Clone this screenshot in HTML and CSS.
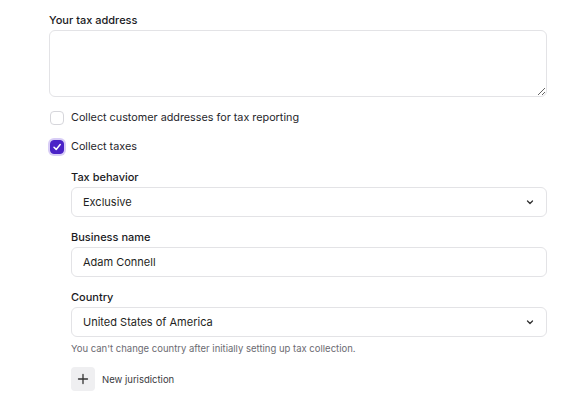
FILE: index.html
```html
<!DOCTYPE html>
<html>
<head>
<meta charset="utf-8">
<link rel="stylesheet" href="styles.css">
</head>
<body>
<div class="form">
  <div class="field">
    <label class="label">Your tax address</label>
    <textarea class="textarea"></textarea>
  </div>
  <label class="check first">
    <span class="box"></span>
    <span>Collect customer addresses for tax reporting</span>
  </label>
  <label class="check second">
    <span class="box checked">
      <svg width="10" height="10" viewBox="0 0 10 10"><path d="M2 5.2 L4.2 7.4 L8.2 2.6" fill="none" stroke="#fff" stroke-width="1.5" stroke-linecap="round" stroke-linejoin="round"/></svg>
    </span>
    <span>Collect taxes</span>
  </label>
  <div class="sub">
    <div class="field">
      <label class="label">Tax behavior</label>
      <div class="select"><span>Exclusive</span>
        <svg class="chev" width="10" height="10" viewBox="0 0 10 10"><path d="M2.5 4 L5 6.5 L7.5 4" fill="none" stroke="#333" stroke-width="1.3" stroke-linecap="round" stroke-linejoin="round"/></svg>
      </div>
    </div>
    <div class="field">
      <label class="label">Business name</label>
      <div class="input">Adam Connell</div>
    </div>
    <div class="field">
      <label class="label">Country</label>
      <div class="select"><span>United States of America</span>
        <svg class="chev" width="10" height="10" viewBox="0 0 10 10"><path d="M2.5 4 L5 6.5 L7.5 4" fill="none" stroke="#333" stroke-width="1.3" stroke-linecap="round" stroke-linejoin="round"/></svg>
      </div>
      <div class="help">You can't change country after initially setting up tax collection.</div>
    </div>
    <div class="add">
      <span class="addbtn"><svg width="12" height="12" viewBox="0 0 12 12"><path d="M6 1.5 V10.5 M1.5 6 H10.5" stroke="#333" stroke-width="1.3" stroke-linecap="round"/></svg></span>
      <span class="addtext">New jurisdiction</span>
    </div>
  </div>
</div>
</body>
</html>
```
FILE: styles.css
```css
html, body { margin: 0; padding: 0; background: #fff; }
body { font-family: Inter, "Noto Sans", sans-serif; color: #1f1f23; font-size: 11px; }
.form { padding: 12px 36px 0 49px; display: flex; flex-direction: column; }
.field { display: flex; flex-direction: column; }
.label { font-weight: 500; font-size: 11px; line-height: 16px; margin-bottom: 2px; color: #1a1a1e; }
.textarea { height: 67px; box-sizing: border-box; border: 1px solid #e3e3e6; border-radius: 6px; resize: vertical; font: inherit; margin: 0; display: block; }
.check { display: flex; align-items: center; gap: 7px; line-height: 16px; font-size: 10.8px; color: #26262b; margin-left: 1px; }
.check.first { margin-top: 13px; }
.check.second { margin-top: 13px; }
.box { width: 14px; height: 14px; box-sizing: border-box; border: 1px solid #d6d6db; border-radius: 4px; display: flex; align-items: center; justify-content: center; background: #fff; }
.box.checked { background: #4a22c7; border-color: #4a22c7; box-shadow: 0 0 0 2px #d8cdf6; }
.sub { margin-left: 22px; display: flex; flex-direction: column; gap: 12px; margin-top: 14px; }
.select, .input { height: 30px; box-sizing: border-box; border: 1px solid #e3e3e6; border-radius: 6px; display: flex; align-items: center; padding: 0 11px; justify-content: space-between; color: #1f1f23; }
.help { font-size: 9.5px; color: #6b6b72; margin-top: 5px; line-height: 14px; }
.add { display: flex; align-items: center; gap: 7px; margin-top: -1px; }
.addbtn { width: 24px; height: 24px; border-radius: 4px; background: #efeff1; display: flex; align-items: center; justify-content: center; }
.addtext { font-size: 9.5px; color: #3a3a40; }
```
